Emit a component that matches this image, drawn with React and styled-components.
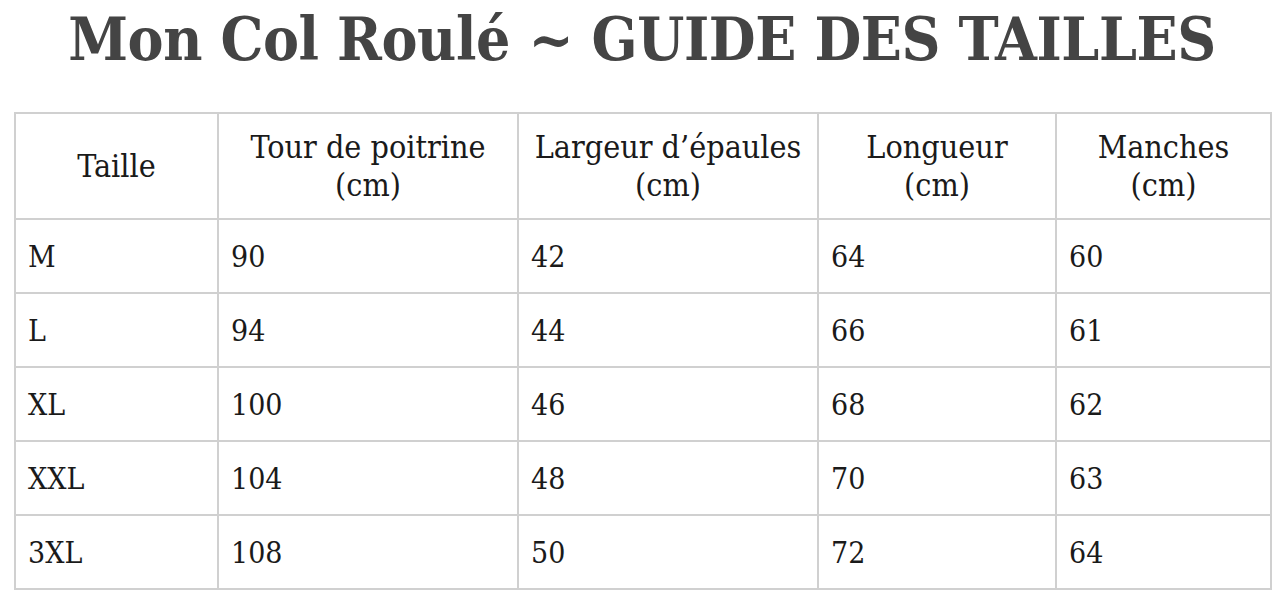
import React from 'react';
import styled, { createGlobalStyle } from 'styled-components';

const GlobalStyle = createGlobalStyle`
  html, body {
    margin: 0;
    padding: 0;
    background: #fff;
  }
`;

const Page = styled.div`
  width: 1279px;
  padding: 0 9px 0 14px;
  box-sizing: border-box;
`;

const Title = styled.h1`
  margin: 0;
  height: 112px;
  line-height: 78px;
  text-align: center;
  font-family: "DejaVu Serif Condensed", "DejaVu Serif", serif;
  font-weight: 700;
  font-size: 60px;
  letter-spacing: -0.4px;
  color: #444;
  white-space: nowrap;
`;

const Table = styled.table`
  width: 1256px;
  border-collapse: collapse;
  table-layout: fixed;
  font-family: "DejaVu Serif Condensed", "DejaVu Serif", serif;
  color: #1a1a1a;
`;

const HeadCell = styled.th`
  height: 104px;
  border: 2px solid #d0d0d0;
  font-size: 32px;
  font-weight: 400;
  text-align: center;
  vertical-align: middle;
  line-height: 38px;
  padding: 0 4px;
  white-space: nowrap;
`;

const Cell = styled.td`
  height: 72px;
  border: 2px solid #d0d0d0;
  font-size: 30px;
  padding: 0 12px;
  vertical-align: middle;
  text-align: left;
`;

const columns = [
  { label: 'Taille', width: 203 },
  { label: ['Tour de poitrine', '(cm)'], width: 300 },
  { label: ['Largeur d\u2019épaules', '(cm)'], width: 300 },
  { label: ['Longueur', '(cm)'], width: 238 },
  { label: ['Manches', '(cm)'], width: 215 },
];

const rows = [
  ['M', '90', '42', '64', '60'],
  ['L', '94', '44', '66', '61'],
  ['XL', '100', '46', '68', '62'],
  ['XXL', '104', '48', '70', '63'],
  ['3XL', '108', '50', '72', '64'],
];

export default function App() {
  return (
    <>
      <GlobalStyle />
      <Page>
        <Title>Mon Col Roulé ~ GUIDE DES TAILLES</Title>
        <Table>
          <colgroup>
            {columns.map((c, i) => (
              <col key={i} style={{ width: c.width }} />
            ))}
          </colgroup>
          <thead>
            <tr>
              {columns.map((c, i) => (
                <HeadCell key={i}>
                  {Array.isArray(c.label) ? (
                    <>
                      {c.label[0]}
                      <br />
                      {c.label[1]}
                    </>
                  ) : (
                    c.label
                  )}
                </HeadCell>
              ))}
            </tr>
          </thead>
          <tbody>
            {rows.map((r, i) => (
              <tr key={i}>
                {r.map((v, j) => (
                  <Cell key={j}>{v}</Cell>
                ))}
              </tr>
            ))}
          </tbody>
        </Table>
      </Page>
    </>
  );
}
